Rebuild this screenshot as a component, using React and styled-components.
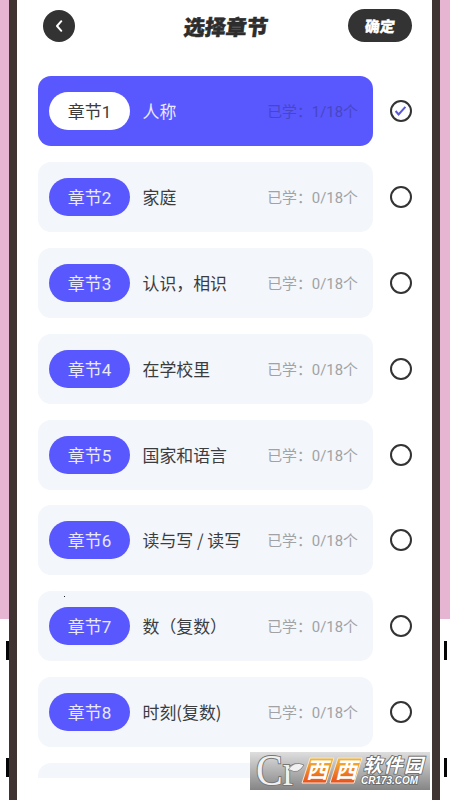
import React, { useState } from 'react';
import styled, { createGlobalStyle } from 'styled-components';

const chapters = [
  { id: 1, name: '人称', learned: 1 },
  { id: 2, name: '家庭', learned: 0 },
  { id: 3, name: '认识，相识', learned: 0 },
  { id: 4, name: '在学校里', learned: 0 },
  { id: 5, name: '国家和语言', learned: 0 },
  { id: 6, name: '读与写 / 读写', learned: 0 },
  { id: 7, name: '数（复数）', learned: 0 },
  { id: 8, name: '时刻(复数)', learned: 0 },
  { id: 9, name: '', learned: 0 },
];

const SiteLogo = () => (
  <LogoBar>
    <svg width="180" height="38" viewBox="0 0 180 38" overflow="visible">
      <defs>
        <linearGradient id="orange" x1="0" y1="0" x2="0" y2="1">
          <stop offset="0" stopColor="#f6bb30" />
          <stop offset="1" stopColor="#e8501c" />
        </linearGradient>
      </defs>
      <LogoSerif x="6" y="33" textLength="40" lengthAdjust="spacingAndGlyphs">Cr</LogoSerif>
      <path d="M38 18 Q44 8 54 13 Q48 23 40 18 Z" fill="#f1f1f1" stroke="#777" strokeWidth=".8" />
      <g stroke="#f3e5d8" strokeWidth="1">
        <path d="M60 6 H84 L76 31 H52 Z" fill="url(#orange)" />
        <path d="M88 6 H112 L104 31 H80 Z" fill="url(#orange)" />
      </g>
      <LogoTile x="56" y="26" textLength="51">西西</LogoTile>
      <LogoText x="113" y="20" $size={19} textLength="60">软件园</LogoText>
      <LogoText x="111" y="32" $size={10} textLength="57" lengthAdjust="spacingAndGlyphs">CR173.COM</LogoText>
    </svg>
  </LogoBar>
);

const App = () => {
  const [selected, setSelected] = useState(1);

  return (
    <Page>
      <GlobalStyle />
      <Side>
        <SideKey />
        <SideKey />
      </Side>
      <Phone>
        <Header>
          <BackButton aria-label="返回">
            <svg width="9" height="14" viewBox="0 0 9 14">
              <path d="M6.3 2.2 L2 7 L6.3 11.8" fill="none" stroke="#fff" strokeWidth="2" strokeLinecap="round" strokeLinejoin="round" />
            </svg>
          </BackButton>
          <Title>选择章节</Title>
          <ConfirmButton>
            <Slant>确定</Slant>
          </ConfirmButton>
        </Header>
        <List>
          {chapters.map((chapter) => {
            const active = chapter.id === selected;
            return (
              <Row key={chapter.id} onClick={() => setSelected(chapter.id)}>
                <Card $active={active}>
                  {chapter.name && (
                    <>
                      <Pill $active={active}>章节{chapter.id}</Pill>
                      <Name $active={active}>{chapter.name}</Name>
                      <Count $active={active}>已学：{chapter.learned}/18个</Count>
                    </>
                  )}
                </Card>
                {chapter.name && (
                  <Radio>
                    {active && (
                      <svg width="13" height="12" viewBox="0 0 13 12">
                        <path d="M1.6 6 L4.6 9.4 L11.4 1.8" fill="none" stroke="#5a58dc" strokeWidth="2" />
                      </svg>
                    )}
                  </Radio>
                )}
              </Row>
            );
          })}
        </List>
        <Speck />
      </Phone>
      <Side $right>
        <SideKey />
        <SideKey />
      </Side>
      <SiteLogo />
    </Page>
  );
};

const GlobalStyle = createGlobalStyle`
  * {
    box-sizing: border-box;
  }
  body {
    margin: 0;
    overflow: hidden;
    font-family: "Noto Sans CJK SC", sans-serif;
  }
  button {
    font-family: inherit;
    border: none;
    padding: 0;
  }
`;

const Page = styled.div`
  position: relative;
  display: flex;
  width: 450px;
  height: 800px;
  overflow: hidden;
  background: linear-gradient(#e5b5d2 0 619px, #fff 619px);
`;

const Side = styled.div`
  display: flex;
  flex-direction: column;
  align-items: flex-end;
  gap: 98px;
  width: ${({ $right }) => ($right ? '10px' : '9px')};
  padding-top: 641px;
  padding-right: ${({ $right }) => ($right ? '3px' : '0')};
`;

const SideKey = styled.span`
  width: 3px;
  height: 19px;
  background: #050505;
`;

const Phone = styled.main`
  position: relative;
  width: 431px;
  height: 800px;
  padding: 0 20.5px 0 21px;
  overflow: hidden;
  background: #fff;
  border: solid #403433;
  border-width: 0 8px 0 8px;
`;

const Header = styled.header`
  display: flex;
  align-items: center;
  justify-content: space-between;
  height: 51px;
  padding-left: 5px;
`;

const BackButton = styled.button`
  display: flex;
  align-items: center;
  justify-content: center;
  width: 32px;
  height: 32px;
  background: #333;
  border-radius: 50%;
`;

const Title = styled.h1`
  margin: 0 0 0 29px;
  color: #2d2d2d;
  font-size: 21px;
  font-weight: 900;
  line-height: 30px;
  -webkit-text-stroke: 0.5px #2d2d2d;
  transform: skewX(-7deg);
`;

const ConfirmButton = styled.button`
  width: 64px;
  height: 33px;
  color: #fff;
  background: #333;
  border-radius: 17px;
  font-size: 15px;
  font-weight: 900;
`;

const Slant = styled.span`
  display: block;
  line-height: 31px;
  -webkit-text-stroke: 0.3px #fff;
  transform: skewX(-7deg);
`;

const List = styled.div`
  display: flex;
  flex-direction: column;
  gap: 15.9px;
  height: 727px;
  padding-top: 25px;
  overflow: hidden;
`;

const Row = styled.div`
  display: flex;
  flex-shrink: 0;
  align-items: center;
  justify-content: space-between;
  height: 70px;
`;

const Card = styled.div`
  display: flex;
  align-items: center;
  width: 335px;
  height: 70px;
  padding: 0 15px 0 11px;
  background: ${({ $active }) => ($active ? '#5957fe' : '#f3f6fa')};
  border-radius: 13px;
`;

const Pill = styled.span`
  width: 81px;
  height: 38px;
  color: ${({ $active }) => ($active ? '#3c3c3c' : '#e9e9ff')};
  background: ${({ $active }) => ($active ? '#fff' : '#5957fe')};
  border-radius: 19px;
  font-family: Roboto, "Noto Sans CJK SC", sans-serif;
  font-size: 17px;
  line-height: 40px;
  text-align: center;
`;

const Name = styled.span`
  flex: 1;
  margin-left: 12.5px;
  color: ${({ $active }) => ($active ? '#e9e9ff' : '#3b3c3e')};
  font-size: 16.9px;
  line-height: 38px;
  white-space: nowrap;
`;

const Count = styled.span`
  padding-top: 2px;
  color: ${({ $active }) => ($active ? '#4846c4' : '#a0a2a6')};
  font-family: Roboto, "Noto Sans CJK SC", sans-serif;
  font-size: 14.9px;
  line-height: 38px;
  white-space: nowrap;
`;

const Radio = styled.span`
  display: flex;
  align-items: center;
  justify-content: center;
  width: 22px;
  height: 22px;
  background: #fff;
  border: 2px solid #333;
  border-radius: 50%;
`;

const Speck = styled.i`
  position: absolute;
  top: 596px;
  left: 47px;
  width: 1px;
  height: 1px;
  background: #222;
`;

const LogoBar = styled.div`
  position: absolute;
  top: 752px;
  left: 250px;
  width: 180px;
  height: 38px;
  background: linear-gradient(#dedede, #858585);
`;

const LogoText = styled.text`
  fill: #fff;
  stroke: #666;
  stroke-width: 1.6px;
  paint-order: stroke;
  font-family: "Liberation Sans", "Noto Sans CJK SC", sans-serif;
  font-size: ${({ $size }) => $size}px;
  font-style: italic;
  font-weight: 700;
`;

const LogoSerif = styled.text`
  fill: #f1f1f1;
  stroke: #777;
  stroke-width: 2px;
  paint-order: stroke;
  font-family: "Liberation Serif", serif;
  font-size: 44px;
`;

const LogoTile = styled.text`
  fill: #fff;
  font-family: "Noto Sans CJK SC", sans-serif;
  font-size: 22px;
  font-style: italic;
  font-weight: 700;
`;

export default App;
